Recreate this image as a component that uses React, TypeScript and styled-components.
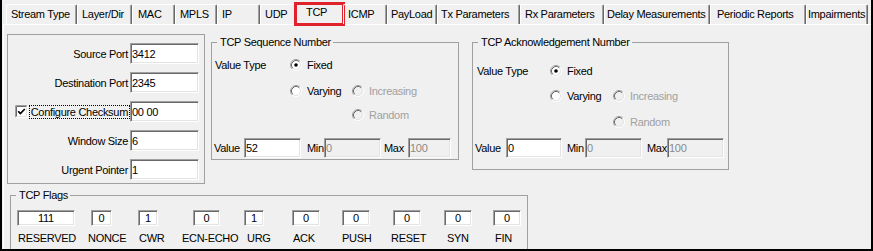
import React from 'react';
import styled, { createGlobalStyle } from 'styled-components';

const GlobalStyle = createGlobalStyle`
  html, body { margin: 0; padding: 0; background: #f0f0f0; }
  body {
    font-family: "Liberation Sans", Arial, sans-serif;
    font-size: 11px;
    letter-spacing: -0.3px;
    color: #000;
  }
  * { box-sizing: border-box; }
`;

const Frame = styled.div`
  width: 873px;
  height: 251px;
  overflow: hidden;
  background: #f0f0f0;
  border-left: 2px solid #000;
  border-right: 2px solid #000;
  border-bottom: 2px solid #000;
  display: flex;
  flex-direction: column;
`;

const TabStrip = styled.div`
  flex: none;
  height: 24px;
  display: flex;
  align-items: flex-start;
  padding: 4px 0 0 4px;
  position: relative;
  z-index: 2;
`;

const Tab = styled.div<{ $w: number; $pl: number }>`
  flex: none;
  width: ${(p) => p.$w}px;
  height: 20px;
  padding: 3px 0 0 ${(p) => p.$pl}px;
  line-height: 13px;
  white-space: nowrap;
  border-top: 1px solid #fff;
  border-left: 1px solid #fff;
  border-right: 1px solid #696969;
  box-shadow: inset -1px 0 0 #a0a0a0;
  border-top-left-radius: 2px;
  border-top-right-radius: 2px;
`;

const ActiveTab = styled.div<{ $w: number; $pl: number }>`
  flex: none;
  width: ${(p) => p.$w + 4}px;
  height: 24px;
  margin: -2px -2px 0 -2px;
  padding: 1px 0 0 ${(p) => p.$pl}px;
  line-height: 13px;
  white-space: nowrap;
  border: 3px solid #e0222d;
  background: #f0f0f0;
`;

const Panel = styled.div`
  flex: 1;
  margin-left: 1px;
  border-top: 1px solid #fff;
  border-left: 1px solid #fff;
  display: flex;
  flex-direction: column;
  align-items: flex-start;
`;

const TopRow = styled.div`
  display: flex;
  align-items: flex-start;
`;

const FieldBox = styled.div`
  flex: none;
  width: 198px;
  height: 150px;
  margin: 9px 0 0 3px;
  border: 1px solid #a0a0a0;
  padding-top: 8px;
  display: grid;
  grid-template-columns: 120px 69px;
  column-gap: 2px;
  row-gap: 8px;
  grid-auto-rows: 21px;
  align-content: start;
`;

const FieldLabel = styled.div<{ $split?: boolean }>`
  display: flex;
  align-items: center;
  justify-content: ${(p) => (p.$split ? 'space-between' : 'flex-end')};
  padding-left: ${(p) => (p.$split ? 7 : 0)}px;
  white-space: nowrap;
`;

const FocusText = styled.span`
  border: 1px dotted #000;
  padding: 0 1px;
  line-height: 12px;
  margin-right: -2px;
`;

const TextBox = styled.input<{ $w?: number; $h?: number; $center?: boolean; $off?: boolean; $ml?: number }>`
  flex: none;
  width: ${(p) => (p.$w ? `${p.$w}px` : '100%')};
  height: ${(p) => p.$h ?? 21}px;
  margin: 0 0 0 ${(p) => p.$ml ?? 0}px;
  padding: 0 1px;
  font: inherit;
  letter-spacing: inherit;
  color: ${(p) => (p.$off ? '#8a8a8a' : '#000')};
  background: ${(p) => (p.$off ? '#f0f0f0' : '#fff')};
  border: 1px solid;
  border-color: #a0a0a0 #fff #fff #a0a0a0;
  box-shadow: inset 1px 1px 0 #696969, inset -1px -1px 0 #e3e3e3;
  text-align: ${(p) => (p.$center ? 'center' : 'left')};
  outline: none;
`;

const Group = styled.fieldset<{ $w: number; $h: number; $ml: number; $mt: number }>`
  flex: none;
  width: ${(p) => p.$w}px;
  height: ${(p) => p.$h}px;
  margin: ${(p) => p.$mt}px 0 0 ${(p) => p.$ml}px;
  padding: 0;
  min-width: 0;
  border: 1px solid #a0a0a0;
`;

const Legend = styled.legend`
  margin-left: 5px;
  padding: 0 2px 0 3px;
  line-height: 13px;
  font-size: 11px;
  white-space: nowrap;
`;

const ChoiceGrid = styled.div<{ $pt: number; $pl: number; $cols: string; $rows: string }>`
  display: grid;
  grid-template-columns: ${(p) => p.$cols};
  grid-template-rows: ${(p) => p.$rows};
  padding: ${(p) => p.$pt}px 0 0 ${(p) => p.$pl}px;
  align-items: start;
`;

const Cell = styled.div<{ $col: number; $row: number; $off?: boolean }>`
  grid-column: ${(p) => p.$col};
  grid-row: ${(p) => p.$row};
  height: 16px;
  display: flex;
  align-items: center;
  gap: 5px;
  white-space: nowrap;
  color: ${(p) => (p.$off ? '#a0a0a0' : '#000')};
`;

const ValueRow = styled.div<{ $mt: number; $ml: number }>`
  display: flex;
  align-items: center;
  height: 20px;
  margin: ${(p) => p.$mt}px 0 0 ${(p) => p.$ml}px;
`;

const RowLabel = styled.span<{ $w: number; $pl?: number }>`
  flex: none;
  width: ${(p) => p.$w}px;
  padding-left: ${(p) => p.$pl ?? 0}px;
  white-space: nowrap;
`;

const FlagRow = styled.div`
  display: flex;
  align-items: flex-start;
  margin-top: 8px;
`;

const FlagCell = styled.div<{ $ml: number; $w: number }>`
  flex: none;
  width: ${(p) => p.$w}px;
  margin-left: ${(p) => p.$ml}px;
  display: flex;
  flex-direction: column;
  align-items: flex-start;
`;

const FlagLabel = styled.span<{ $ml: number }>`
  margin: 6px 0 0 ${(p) => p.$ml}px;
  line-height: 13px;
  white-space: nowrap;
`;

const Radio: React.FC<{ checked?: boolean; off?: boolean }> = ({ checked, off }) => (
  <svg width="12" height="12" viewBox="0 0 12 12" style={{ flex: 'none' }}>
    <circle cx="6" cy="6" r="4.2" fill={off ? '#f0f0f0' : '#fff'} />
    <path d="M2.11 9.89 A5.5 5.5 0 0 1 9.89 2.11" stroke="#a0a0a0" fill="none" />
    <path d="M9.89 2.11 A5.5 5.5 0 0 1 2.11 9.89" stroke="#ffffff" fill="none" />
    <path d="M2.82 9.18 A4.5 4.5 0 0 1 9.18 2.82" stroke="#696969" fill="none" />
    <path d="M9.18 2.82 A4.5 4.5 0 0 1 2.82 9.18" stroke="#e3e3e3" fill="none" />
    {checked && <circle cx="6" cy="6" r="1.8" fill="#000" />}
  </svg>
);

const CheckBox: React.FC = () => (
  <svg width="13" height="13" viewBox="0 0 13 13" style={{ flex: 'none' }}>
    <rect x="0" y="0" width="13" height="13" fill="#fff" />
    <path d="M0.5 12.5 V0.5 H12.5" stroke="#a0a0a0" fill="none" />
    <path d="M1.5 11.5 V1.5 H11.5" stroke="#696969" fill="none" />
    <path d="M0.5 12.5 H12.5 V0.5" stroke="#ffffff" fill="none" />
    <path d="M1.5 11.5 H11.5 V1.5" stroke="#e3e3e3" fill="none" />
    <path d="M3.2 6.2 L5.4 8.6 L9.8 4" stroke="#000" strokeWidth="1.7" fill="none" />
  </svg>
);

const tabs = [
  { label: 'Stream Type', w: 71, pl: 4 },
  { label: 'Layer/Dir', w: 55, pl: 4 },
  { label: 'MAC', w: 43, pl: 5 },
  { label: 'MPLS', w: 42, pl: 4 },
  { label: 'IP', w: 43, pl: 4 },
  { label: 'UDP', w: 36, pl: 4 },
  { label: 'TCP', w: 47, pl: 9, active: true },
  { label: 'ICMP', w: 44, pl: 4 },
  { label: 'PayLoad', w: 50, pl: 3 },
  { label: 'Tx Parameters', w: 83, pl: 3 },
  { label: 'Rx Parameters', w: 84, pl: 4 },
  { label: 'Delay Measurements', w: 106, pl: 2 },
  { label: 'Periodic Reports', w: 96, pl: 6 },
  { label: 'Impairments', w: 62, pl: 1 },
];

const flags = [
  { name: 'RESERVED', value: '111', inL: 17, inW: 58, lbL: 18 },
  { name: 'NONCE', value: '0', inL: 91, inW: 21, lbL: 88 },
  { name: 'CWR', value: '1', inL: 138, inW: 20, lbL: 139 },
  { name: 'ECN-ECHO', value: '0', inL: 193, inW: 27, lbL: 182 },
  { name: 'URG', value: '1', inL: 244, inW: 20, lbL: 247 },
  { name: 'ACK', value: '0', inL: 292, inW: 28, lbL: 293 },
  { name: 'PUSH', value: '0', inL: 342, inW: 28, lbL: 342 },
  { name: 'RESET', value: '0', inL: 393, inW: 28, lbL: 391 },
  { name: 'SYN', value: '0', inL: 444, inW: 28, lbL: 447 },
  { name: 'FIN', value: '0', inL: 493, inW: 28, lbL: 495 },
];

const FLAG_BASE = 11;
const flagCells = flags.map((f, i) => {
  const left = Math.min(f.inL, f.lbL);
  const next = flags[i + 1];
  const nextLeft = next ? Math.min(next.inL, next.lbL) : left + 40;
  return {
    ...f,
    left,
    w: nextLeft - left,
    ml: i === 0 ? left - FLAG_BASE : 0,
  };
});

type NumberGroupProps = {
  title: string;
  value: string;
  w: number;
  h: number;
  ml: number;
  pt: number;
  pl: number;
  cols: string;
  rows: string;
  vmt: number;
  vcols: { value: number; minL: number; minPl: number; min: number; maxL: number; maxPl: number; max: number; valueL: number };
};

const NumberGroup: React.FC<NumberGroupProps> = ({ title, value, w, h, ml, pt, pl, cols, rows, vmt, vcols }) => (
  <Group $w={w} $h={h} $ml={ml} $mt={11}>
    <Legend>{title}</Legend>
    <ChoiceGrid $pt={pt} $pl={pl} $cols={cols} $rows={rows}>
      <Cell $col={1} $row={1}>Value Type</Cell>
      <Cell $col={2} $row={1}>
        <Radio checked />
        <span>Fixed</span>
      </Cell>
      <Cell $col={2} $row={2}>
        <Radio />
        <span>Varying</span>
      </Cell>
      <Cell $col={3} $row={2} $off>
        <Radio off />
        <span>Increasing</span>
      </Cell>
      <Cell $col={3} $row={3} $off>
        <Radio off />
        <span>Random</span>
      </Cell>
    </ChoiceGrid>
    <ValueRow $mt={vmt} $ml={2}>
      <RowLabel $w={vcols.valueL}>Value</RowLabel>
      <TextBox $w={vcols.value} $h={20} readOnly value={value} />
      <RowLabel $w={vcols.minL} $pl={vcols.minPl}>Min</RowLabel>
      <TextBox $w={vcols.min} $h={20} $off readOnly value="0" />
      <RowLabel $w={vcols.maxL} $pl={vcols.maxPl}>Max</RowLabel>
      <TextBox $w={vcols.max} $h={20} $off readOnly value="100" />
    </ValueRow>
  </Group>
);

export default function App() {
  return (
    <>
      <GlobalStyle />
      <Frame>
        <TabStrip>
          {tabs.map((t) =>
            t.active ? (
              <ActiveTab key={t.label} $w={t.w} $pl={t.pl}>
                {t.label}
              </ActiveTab>
            ) : (
              <Tab key={t.label} $w={t.w} $pl={t.pl}>
                {t.label}
              </Tab>
            )
          )}
        </TabStrip>
        <Panel>
          <TopRow>
            <FieldBox>
              <FieldLabel>Source Port</FieldLabel>
              <TextBox readOnly value="3412" />
              <FieldLabel>Destination Port</FieldLabel>
              <TextBox readOnly value="2345" />
              <FieldLabel $split>
                <CheckBox />
                <FocusText>Configure Checksum</FocusText>
              </FieldLabel>
              <TextBox readOnly value="00 00" />
              <FieldLabel>Window Size</FieldLabel>
              <TextBox readOnly value="6" />
              <FieldLabel>Urgent Pointer</FieldLabel>
              <TextBox readOnly value="1" />
            </FieldBox>
            <NumberGroup
              title="TCP Sequence Number"
              value="52"
              w={248}
              h={124}
              ml={6}
              pt={8}
              pl={3}
              cols="75px 62px auto"
              rows="26px 24px 16px"
              vmt={15}
              vcols={{ valueL: 30, value: 57, minL: 23, minPl: 6, min: 57, maxL: 27, maxPl: 3, max: 43 }}
            />
            <NumberGroup
              title="TCP Acknowledgement Number"
              value="0"
              w={257}
              h={134}
              ml={13}
              pt={14}
              pl={4}
              cols="73px 63px auto"
              rows="25px 26px 16px"
              vmt={8}
              vcols={{ valueL: 31, value: 56, minL: 23, minPl: 5, min: 57, maxL: 25, maxPl: 5, max: 57 }}
            />
          </TopRow>
          <Group $w={518} $h={80} $ml={6} $mt={5}>
            <Legend>TCP Flags</Legend>
            <FlagRow>
              {flagCells.map((f) => (
                <FlagCell key={f.name} $ml={f.ml} $w={f.w}>
                  <TextBox $w={f.inW} $h={16} $center $ml={f.inL - f.left} readOnly value={f.value} />
                  <FlagLabel $ml={f.lbL - f.left}>{f.name}</FlagLabel>
                </FlagCell>
              ))}
            </FlagRow>
          </Group>
        </Panel>
      </Frame>
    </>
  );
}
